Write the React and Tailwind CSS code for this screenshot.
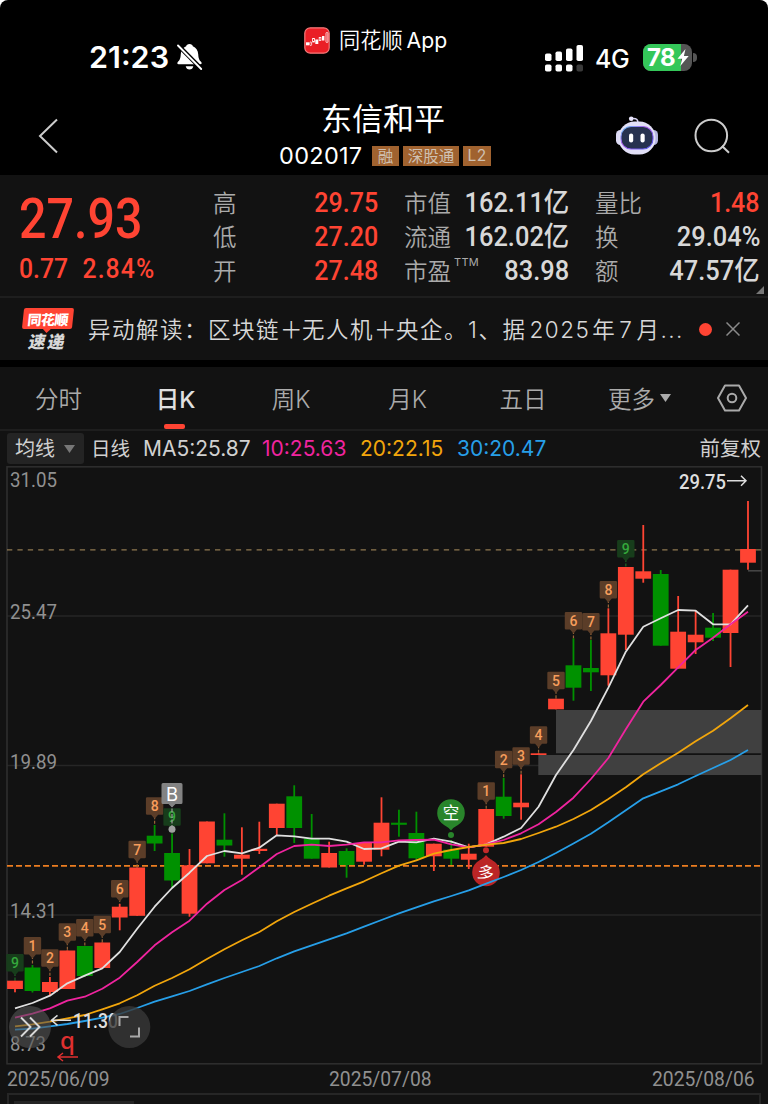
import React from 'react';

const STEP = 17.452;
const xAt = (i) => 15 + STEP * i;

const RED = '#ff4433';
const GREEN = '#009100';

// [color, body top, body bottom, high, low]
const candles = [
  ['r', 980.7, 989, 980.7, 992.3], ['g', 967.5, 991, 965, 992.5], ['r', 982, 992, 977, 995], ['r', 950.5, 989, 950.5, 989],
  ['g', 946, 976, 946, 977], ['r', 942.5, 968, 942.5, 969], ['r', 906.7, 917.5, 904, 930.3], ['r', 867.5, 915.8, 867.5, 915.8],
  ['g', 835.7, 843.5, 825, 851], ['g', 853, 880.5, 834, 887.5], ['r', 865.3, 913.7, 849, 916.7], ['r', 821.5, 863.3, 821.5, 863.3],
  ['g', 839.7, 845.5, 813.3, 856.7], ['r', 854.7, 858.7, 827.3, 874.7], ['r', 848.8, 851, 821.7, 854], ['r', 803.7, 828, 803.7, 835.3],
  ['g', 796.3, 828, 785.3, 843], ['g', 838.5, 858.7, 814, 858.7], ['r', 853, 867.5, 841.7, 867.5], ['g', 851, 865, 848.3, 877.7],
  ['r', 843, 861.7, 843, 864.7], ['r', 822.7, 849.7, 797.3, 856.3], ['g', 822.7, 824.8, 809.7, 836.7], ['g', 833, 858.3, 811.7, 860.7],
  ['r', 843.7, 856.3, 843.7, 871], ['g', 849.7, 858.7, 840, 865], ['r', 853.7, 859.7, 843.7, 869], ['r', 809, 846.7, 809, 846.7],
  ['g', 796.7, 816, 778, 818.7], ['r', 802.7, 807.3, 774.3, 819.7], ['r', 753.3, 755, 753.3, 755], ['r', 698.7, 709.3, 698.7, 709.3],
  ['g', 665.3, 687.7, 638.3, 700.7], ['g', 668, 672.3, 640, 691], ['r', 633.3, 675.3, 608.3, 685.7], ['r', 567, 634.7, 567, 650],
  ['r', 571.3, 578.7, 525, 582.7], ['g', 574, 645.7, 570, 645.7], ['r', 631.7, 668.7, 596, 668.7], ['r', 634.7, 642.3, 610.3, 654],
  ['g', 627.7, 637.7, 613, 641], ['r', 569.7, 633, 569.7, 667], ['r', 549, 562.7, 501, 569.7],
];

const averages = [
  ['#e0e0e0', [1008.3, 1003, 995.7, 983.3, 975.7, 968.3, 952, 928.7, 906.7, 888, 872.7, 856, 851, 853.3, 847.7, 835.3, 836.3, 838.7, 838.7, 841.7, 849, 848.3, 841.7, 842.3, 838.7, 841.7, 847.3, 844.3, 836.7, 828, 806.7, 775, 750, 721, 687.7, 651.7, 626.7, 618.3, 610, 610.7, 624.3, 624.3, 605.3]],
  ['#f0249f', [1017.7, 1013.7, 1008.3, 1000.7, 996.7, 988.7, 977.7, 962, 945.3, 932.3, 920.7, 903.7, 890, 880, 867.3, 854, 846, 844.7, 846, 844.7, 842.3, 842.3, 840.3, 840, 839.7, 844.3, 847.3, 844.3, 840, 833.3, 824.3, 812, 797.7, 779, 758, 729.3, 701.7, 685, 667.3, 650, 637.7, 624.3, 611.7]],
  ['#f2a60c', [1026.3, 1024.3, 1021.7, 1018.3, 1015, 1009.3, 1003.3, 995.3, 985.7, 978, 969.3, 959, 949.3, 940.3, 932, 921.3, 912, 903.7, 895.7, 888.3, 881.3, 873.3, 865.7, 860.3, 853.7, 850, 847, 844.7, 843, 839, 833, 826.7, 819, 810, 799, 787.3, 774.3, 763.3, 752.7, 741.3, 730.7, 718.3, 705]],
  ['#279fe8', [1029.7, 1028.7, 1026.3, 1024, 1021, 1017.7, 1014, 1008, 1001.7, 996.3, 991, 984.3, 978, 972, 966, 958.3, 951.3, 945.3, 939.3, 933.3, 926.7, 920, 913.3, 907.3, 901.3, 896, 890.3, 883.7, 877, 870, 862, 853, 843.5, 833.7, 822.3, 810.3, 798.3, 791.3, 784.3, 776, 768, 760, 750]],
];

// [candle index, label, box top]
const counts = [
  [0, '9', 954], [1, '1', 937], [2, '2', 949.3], [3, '3', 923.3], [4, '4', 919], [5, '5', 915.7], [6, '6', 880],
  [7, '7', 840.7], [8, '8', 797.3], [9, '9', 808.3], [27, '1', 782.3], [28, '2', 750.7], [29, '3', 747.3],
  [30, '4', 726.3], [31, '5', 671.7], [32, '6', 612], [33, '7', 613], [34, '8', 581], [35, '9', 540],
];

const quotes = [
  [['高', '29.75', true], ['低', '27.20', true], ['开', '27.48', true]],
  [['市值', '162.11亿'], ['流通', '162.02亿'], ['市盈', '83.98']],
  [['量比', '1.48', true], ['换', '29.04%'], ['额', '47.57亿']],
];

const quoteCols = ['w-[165px] ml-[213px]', 'w-[165px] ml-[26px]', 'w-[165px] ml-[26px]'];

const StatusBar = () => (
  <div className="relative h-[90px] shrink-0">
    <div className="absolute left-[89px] top-[39px] flex items-center">
      <span className="w-[81px] font-['Inter'] text-[30.500px] font-semibold leading-9">21:23</span>
      <svg className="ml-[6px]" width="27" height="28" viewBox="0 0 27 28" fill="#fff">
        <path d="M13.500 1c2 0 3 1 3.300 2.200 3.200 1.200 5.200 4 5.400 7.800.2 4.500 1.200 6.300 3 8 .8.800.6 2.200-.8 2.200H2.600c-1.400 0-1.600-1.400-.8-2.200 1.800-1.700 2.800-3.500 3-8 .2-3.800 2.200-6.600 5.400-7.800.3-1.200 1.300-2.200 3.300-2.200z" />
        <path d="M9.700 23.300h7.600c-.3 2-1.900 3.300-3.800 3.300s-3.500-1.300-3.800-3.300z" />
        <path d="M2.300 2.500 25.300 25.800" stroke="#000" strokeWidth="4.400" />
        <path d="M2 2.500 25.200 26" stroke="#fff" strokeWidth="1.900" strokeLinecap="round" />
      </svg>
    </div>
    <div className="absolute left-[304px] top-[26px] flex items-center gap-[9px]">
      <svg width="26" height="27" viewBox="0 0 26 27">
        <rect x=".8" y=".8" width="24.400" height="25.400" rx="5.500" fill="#ea1f26" stroke="#f77b7b" strokeWidth="1.200" />
        <g fill="#fff">
          <rect x="2" y="15.300" width="3.200" height="3" /><rect x="11.300" y="12.500" width="3" height="4.500" /><rect x="18" y="9" width="2.400" height="4.500" />
        </g>
        <g fill="none" stroke="#fff" strokeWidth=".8">
          <rect x="5.800" y="15" width="1.800" height="3.500" rx=".8" /><rect x="8.600" y="11.500" width="1.900" height="3.500" /><rect x="15.200" y="10.500" width="1.700" height="3" /><rect x="22" y="5.500" width="1.900" height="10" rx=".9" />
        </g>
      </svg>
      <span className="font-['Inter','Noto_Sans_CJK_SC',sans-serif] text-[21.200px] font-[350] leading-7">同花顺<span className="ml-[4px] font-normal">App</span></span>
    </div>
    <div className="absolute left-[545px] top-[42px] flex items-center">
      <svg width="38" height="28" viewBox="0 0 38 28" fill="#fff">
        <rect x="0" y="9.500" width="6.500" height="7.500" rx="1.800" /><rect x="10.500" y="7.500" width="6.500" height="9.500" rx="1.800" />
        <rect x="21" y="4.500" width="6.500" height="12.500" rx="1.800" /><rect x="31.500" y="1" width="6.500" height="16" rx="1.800" />
        <rect x="0" y="20.500" width="6.500" height="7" rx="1.800" /><rect x="10.500" y="20.500" width="6.500" height="7" rx="1.800" />
        <rect x="21" y="20.500" width="6.500" height="7" rx="1.800" /><rect x="31.500" y="20.500" width="6.500" height="7" rx="1.800" fill="#3a3a3a" />
      </svg>
      <span className="ml-[12px] mt-[3px] w-[37px] font-['Inter'] text-[25px] font-medium leading-7 tracking-[-0.500px]">4G</span>
      <div className="relative ml-[11px] h-[27px] w-[49px] overflow-hidden rounded-[8px] bg-[#555]">
        <div className="h-full w-[38px] bg-[#34c759]" />
        <span className="absolute left-[4px] top-0 font-['Inter'] text-[24px] font-bold leading-[27px] tracking-[-0.500px]">78</span>
        <svg className="absolute left-[34px] top-[5px]" width="12" height="17" viewBox="0 0 12 17" fill="#fff">
          <path d="M8.500 0 0.500 9.700h4.700L3.300 17 11.700 7H6.900z" />
        </svg>
      </div>
      <div className="ml-[1px] h-[9px] w-[4px] rounded-r-full bg-[#555]" />
    </div>
  </div>
);

const Header = () => (
  <div className="relative flex h-[85px] shrink-0 flex-col items-center">
    <h1 className="mt-[8px] mr-[2px] text-[31px] font-normal leading-[37px]">东信和平</h1>
    <div className="flex items-center gap-[4px] pl-[2px] text-[15.500px] leading-none text-[#cfc0b2]">
      <span className="mr-[4px] w-[85px] font-['Inter'] text-[23.500px] leading-[42px] tracking-[0.300px] text-white">002017</span>
      <span className="flex h-[20px] w-[27px] items-center justify-center bg-[#a0622f]">融</span>
      <span className="flex h-[20px] w-[56px] items-center justify-center bg-[#a0622f]">深股通</span>
      <span className="flex h-[20px] w-[28px] items-center justify-center bg-[#a0622f] font-['Inter'] tracking-[0.500px]">L2</span>
    </div>
    <svg className="absolute left-[38px] top-[28px]" width="22" height="36" viewBox="0 0 22 36" fill="none" stroke="#ccc" strokeWidth="2">
      <path d="M19 1.500 2 18l17 16.500" />
    </svg>
    <svg className="absolute left-[615px] top-[25px]" width="44" height="41" viewBox="0 0 44 41">
      <defs>
        <linearGradient id="visor" x1="0" y1="0" x2="1" y2="1">
          <stop offset="0" stopColor="#55c8f5" /><stop offset=".4" stopColor="#b05cf0" /><stop offset="1" stopColor="#4a56e8" />
        </linearGradient>
      </defs>
      <path d="M17 3.500c5-.5 6 1.500 6 5" fill="none" stroke="#d5d0f0" strokeWidth="1.600" />
      <circle cx="16.200" cy="3.700" r="2.300" fill="#e8e4fa" />
      <rect x="1" y="15" width="9" height="15" rx="4.500" fill="#dcdaf4" /><rect x="34" y="15" width="9" height="15" rx="4.500" fill="#b5b5e0" />
      <rect x="3.500" y="6.500" width="37" height="33" rx="16" fill="#e2e0f7" />
      <rect x="6" y="11.500" width="32" height="22.500" rx="10" fill="#27324f" stroke="url(#visor)" strokeWidth="1.100" />
      <rect x="14" y="18.500" width="4.200" height="9" rx="2.100" fill="#fff" /><rect x="25.500" y="18.500" width="4.200" height="9" rx="2.100" fill="#fff" />
    </svg>
    <svg className="absolute left-[694px] top-[28px]" width="36" height="37" viewBox="0 0 36 37" fill="none" stroke="#ccc" strokeWidth="2">
      <circle cx="17.300" cy="17.500" r="15.800" /><path d="m28 28 7 6.800" />
    </svg>
  </div>
);

const Quote = () => (
  <div className="relative flex h-[123px] shrink-0 border-b-2 border-[#1e1e1e] bg-[#121212] pt-[11px]">
    <div className="absolute left-[19px] top-[15px] font-['Roboto'] text-[#ff4433]">
      <div className="origin-left scale-x-[0.880] text-[55px] font-medium leading-[58px]">27.93</div>
      <div className="flex origin-left scale-x-[0.900] gap-[16px] text-[27.500px] font-medium leading-[41px]"><span>0.77</span><span className="tracking-[1.200px]">2.84%</span></div>
    </div>
    {quotes.map((rows, c) => (
      <div key={c} className={quoteCols[c]}>
        {rows.map(([label, value, up]) => (
          <div key={label} className="flex h-[34px] items-center justify-between whitespace-nowrap">
            <span className="relative flex text-[23.500px] font-[350] text-[#aaa]">
              {label}
              {label === '市盈' && <sup className="absolute top-[4px] left-[50px] font-['Inter'] text-[11px] leading-none font-normal tracking-[0.300px]">TTM</sup>}
            </span>
            <span className={up ? 'origin-right scale-x-[0.910] text-[27.500px] font-medium font-[Roboto] text-[#ff4433]' : "origin-right scale-x-[0.925] text-[27.500px] font-medium font-['Roboto','Noto_Sans_CJK_SC',sans-serif] text-[#d8d8d8]"}>{value}</span>
          </div>
        ))}
      </div>
    ))}
    <svg className="absolute right-[4px] bottom-[2px]" width="8" height="8" fill="#777"><path d="M8 0v8H0z" /></svg>
  </div>
);

const News = () => (
  <div className="flex h-[62px] shrink-0 items-center bg-[#121212] pl-[22px]">
    <div className="flex w-[52px] flex-col items-center">
      <div className="relative flex h-[21px] w-[50px] -skew-x-6 items-center justify-center rounded-[2px] bg-[#ff4433] text-[14px] font-black leading-none tracking-[-0.500px]">
        同花顺
        <svg className="absolute top-[21px] left-[21px]" width="8" height="4" fill="#ff4433"><path d="M0 0h8L4 4z" /></svg>
      </div>
      <div className="mt-[2px] -skew-x-12 text-[17px] font-black leading-[19px] tracking-[2px] text-[#d8d8d8]">速递</div>
    </div>
    <div className="mt-[2px] ml-[14px] w-[596px] overflow-hidden whitespace-nowrap font-['Inter','Noto_Sans_CJK_SC',sans-serif] text-[22.500px] font-[350] tracking-[1.500px] text-[#d8d8d8]">
      异动解读：区块链<span className="mr-[-2px]">＋</span>无人机<span className="mr-[-2px]">＋</span>央企。1、据<span className="ml-[3px] mr-[2px]">2025</span>年<span className="mx-[3px]">7</span>月...
    </div>
    <div className="ml-[15px] size-[13px] rounded-full bg-[#ff4433]" />
    <svg className="ml-[14px]" width="14" height="14" stroke="#8a8a8a" strokeWidth="1.500"><path d="m.5.5 13 13m0-13-13 13" /></svg>
  </div>
);

const Tabs = () => (
  <div className="mt-[7px] flex h-[64px] shrink-0 items-center border-b-2 border-[#1e1e1e] bg-[#121212] font-['Inter','Noto_Sans_CJK_SC',sans-serif] text-[23.500px] font-[350] text-[#aaa]">
    <span className="w-[117px] pt-[4px] text-center">分时</span>
    <span className="relative flex h-full w-[117px] items-center justify-center pt-[3px] font-medium text-[#e0e0e0]">
      日K
      <span className="absolute left-[47px] bottom-0 h-[5px] w-[21px] rounded-[2px] bg-[#ff4433]" />
    </span>
    <span className="w-[114px] pt-[4px] text-center">周K</span>
    <span className="w-[119px] pt-[4px] text-center">月K</span>
    <span className="w-[112px] pt-[4px] text-center">五日</span>
    <span className="ml-[29px] flex items-center">
      <span className="pt-[4px]">更多</span>
      <svg className="ml-[5px]" width="11" height="8" fill="#aaa"><path d="M0 0h11L5.500 8z" /></svg>
    </span>
    <svg className="ml-[46px]" width="30" height="28" viewBox="0 0 30 28" fill="none" stroke="#aaa" strokeWidth="2">
      <path d="M8 1.500h14l7 12.500-7 12.500H8L1 14z" strokeLinejoin="round" /><circle cx="15" cy="14" r="4.300" />
    </svg>
  </div>
);

const Legend = () => (
  <div className="flex h-[35px] shrink-0 items-center whitespace-nowrap bg-[#121212] pr-[7px] pl-[7px] font-['Inter','Noto_Sans_CJK_SC',sans-serif] text-[21px] font-normal leading-none text-[#d0d0d0]">
    <div className="flex h-[31px] w-[77px] items-center rounded-[3px] bg-[#242424] pl-[8px] text-[20px]">
      均线
      <svg className="ml-[9px]" width="11" height="8" fill="#777"><path d="M0 0h11L5.500 8z" /></svg>
    </div>
    <span className="ml-[7px] w-[52px] pt-[2px] text-[19.500px]">日线</span>
    <span className="w-[119px]">MA5:25.87</span>
    <span className="w-[98px] text-[#f0249f]">10:25.63</span>
    <span className="w-[97px] text-[#f2a60c]">20:22.15</span>
    <span className="text-[#279fe8]">30:20.47</span>
    <span className="ml-auto pt-[2px] text-[20.500px]">前复权</span>
  </div>
);

const CountFlag = ({ i, label, top }) => {
  const x = xAt(i);
  const green = label === '9';
  return (
    <g>
      <path d={`M${x} ${top + 19}V${candles[i][3]}`} stroke={green ? '#1f6a26' : '#9a6638'} strokeWidth="1.200" strokeDasharray="3 1.500" />
      <path d={`M${x - 7.5} ${top}h15q1.200 0 1.200 1.200v15.100q0 1.200-1.200 1.200h-4l-3.500 4-3.500-4h-4q-1.200 0-1.200-1.200v-15.100q0-1.200 1.200-1.200z`} fill={green ? '#173d1b' : '#5b3d28'} />
      <text x={x} y={top + 13.8} textAnchor="middle" fontSize="14" fontWeight="500" fill={green ? '#35a83c' : '#f79d5c'}>{label}</text>
    </g>
  );
};

const PriceLabel = ({ y, width = 47, children }) => (
  <text x="10" y={y} fontSize="20.500" textLength={width} lengthAdjust="spacingAndGlyphs" fill="#909090">{children}</text>
);

const Chart = () => (
  <svg className="block shrink-0 bg-[#121212] font-['Roboto','Noto_Sans_CJK_SC',sans-serif]" width="768" height="599" viewBox="0 466 768 599">
    <g stroke="#262626" strokeWidth="1.500" fill="none">
      <path d="M7 616h754M7 765.500h754M7 915h754" />
      <rect x="7" y="466.800" width="754.500" height="597" stroke="#303030" />
    </g>
    <path d="M556 710h205.500v43.300H556zM538.300 755h223.200v20H538.300z" fill="#404040" />
    <path d="M7 549.800h755" stroke="#8f7850" strokeWidth="1.300" strokeDasharray="5.300 5.100" />
    <path d="M7 865.800h755" stroke="#ec7d20" strokeWidth="1.700" strokeDasharray="6 3" />
    <path d="M748 570.800h14" stroke="#484848" strokeWidth="1.500" />
    <PriceLabel y={487}>31.05</PriceLabel>
    <PriceLabel y={619}>25.47</PriceLabel>
    <PriceLabel y={769}>19.89</PriceLabel>
    <PriceLabel y={918}>14.31</PriceLabel>
    <PriceLabel y={1051} width={36}>8.73</PriceLabel>
    {candles.map(([c, top, bottom, high, low], i) => (
      <g key={i} fill={c === 'r' ? RED : GREEN}>
        <rect x={xAt(i) - 0.9} y={high} width="1.800" height={low - high} />
        <rect x={xAt(i) - 7.9} y={top} width="15.800" height={bottom - top} />
      </g>
    ))}
    {counts.map(([i, label, top]) => <CountFlag key={i} i={i} label={label} top={top} />)}

    <path d="M172 803v24" stroke="#9a9a9a" strokeWidth="1.200" strokeDasharray="4 1.500" />
    <path d="M163 783h18q1.500 0 1.500 1.500v18q0 1.500-1.500 1.500h-5.500l-3.500 3.500-3.500-3.500H163q-1.500 0-1.500-1.500v-18q0-1.500 1.500-1.500z" fill="#838383" />
    <text x="172" y="800.500" textAnchor="middle" fontSize="18.500" className="font-['Inter']" fill="#fff">B</text>
    <circle cx="172" cy="829.300" r="3.500" fill="#a0a0a0" />

    <path d="M451 830.500c-3-4-6-4.500-9.500-7.500A13.800 13.800 0 1 1 460.500 823c-3.500 3-6.500 3.500-9.500 7.500z" fill="#29852b" />
    <circle cx="451" cy="835" r="3" fill="#29852b" />
    <text x="451" y="819" textAnchor="middle" fontSize="16.500" fill="#fff">空</text>
    <circle cx="486" cy="850.300" r="3" fill="#c22a2a" />
    <path d="M486 855c3 4 6 4.500 9.500 7.500A13.800 13.800 0 1 1 476.500 862.500c3.500-3 6.500-3.500 9.500-7.500z" fill="#bb2526" />
    <text x="486" y="878.500" textAnchor="middle" fontSize="16.500" fill="#fff" transform="rotate(12 486 872)">多</text>

    {averages.map(([color, ys]) => (
      <polyline key={color} points={ys.map((y, i) => `${xAt(i)},${y}`).join(' ')} fill="none" stroke={color} strokeWidth="1.800" strokeLinejoin="round" />
    ))}

    <text x="679" y="488.500" fontSize="21" fontWeight="500" textLength="47" lengthAdjust="spacingAndGlyphs" fill="#dedede">29.75</text>
    <path d="M727 480.700h19m-5-5 5 5-5 5" fill="none" stroke="#dedede" strokeWidth="1.500" />
    <text x="73" y="1028" fontSize="20.500" fontWeight="500" textLength="45" lengthAdjust="spacingAndGlyphs" fill="#dedede">11.30</text>
    <path d="M71 1020.300H51.500m6-5-6 5 6 5" fill="none" stroke="#dedede" strokeWidth="1.500" />
    <text x="60" y="1049" fontSize="24" fontWeight="500" fill="#e03030" className="font-['Noto_Sans']">q</text>
    <path d="M78 1057H58m5-4-5 4 5 4" fill="none" stroke="#e03030" strokeWidth="1.500" />

    <circle cx="30" cy="1027" r="21" fill="#555" fillOpacity=".6" />
    <path d="m21 1017.500 9.500 9.500-9.500 9.500m9-19 9.500 9.500-9.500 9.500" fill="none" stroke="#d8d8d8" strokeWidth="1.900" />
    <circle cx="129.300" cy="1027" r="21" fill="#383838" fillOpacity=".8" />
    <path d="M119.500 1026v-9h9M130 1036.500h9v-9" fill="none" stroke="#a8a8a8" strokeWidth="2" />
  </svg>
);

export default function App() {
  return (
    <div className="h-[1104px] w-[768px] overflow-hidden bg-white">
      <div className="flex h-full flex-col rounded-t-[8px] bg-black font-['Noto_Sans_CJK_SC',sans-serif] text-white">
        <StatusBar />
        <Header />
        <Quote />
        <News />
        <Tabs />
        <Legend />
        <Chart />
        <div className="flex grow flex-col bg-[#121212] px-[7px]">
          <div className="flex h-[28px] justify-between font-['Roboto'] text-[20.500px] leading-[28px] text-[#909090]">
            <span className="w-[110px] origin-left scale-x-[0.940]">2025/06/09</span>
            <span className="w-[112px] origin-left scale-x-[0.940]">2025/07/08</span>
            <span className="w-[109px] origin-left scale-x-[0.940]">2025/08/06</span>
          </div>
          <div className="h-[11px] border-2 border-b-0 border-[#262626] px-[5px] pt-[6px]">
            <div className="h-[3px] w-[120px] bg-[#242424]" />
          </div>
        </div>
      </div>
    </div>
  );
}
